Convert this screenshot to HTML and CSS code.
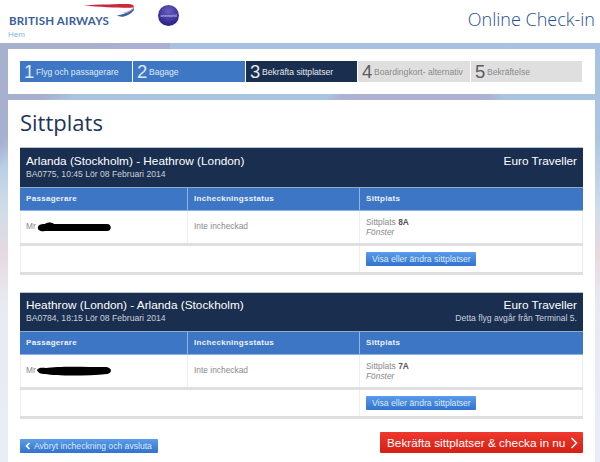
FILE: index.html
```html
<!DOCTYPE html>
<html lang="en">
<head>
    <meta charset="UTF-8">
    <meta name="viewport" content="width=device-width, initial-scale=1.0">
    <title>Online Check-in</title>
    <link rel="stylesheet" href="styles.css">
</head>
<body>
    <div class="header">
        <div class="logo-box">
            <div class="logo-top">
                <span class="logo-name">BRITISH AIRWAYS</span>
                <svg class="speedmarque" width="54" height="14" viewBox="0 0 54 14">
                    <path d="M0 1.5 C14 0.5 36 0 45 0 C49 0 51 1 51 3.5 C44 4 22 3.5 0 1.5 Z" fill="#c8283a"/>
                    <path d="M34 11.5 C40 10.5 46 8 51 4 L51 6 C48 10 44 12 41 12.5 C38 13 36 12.5 34 11.5 Z" fill="#3a62a8"/>
                    <path d="M39 9 C43 8 47 6.5 51 3.5 C50 5.5 47 8 43 9 Z" fill="#dfa9ae"/>
                </svg>
            </div>
            <a class="home-link">Hem</a>
        </div>
        <div class="oneworld"><span>oneworld</span></div>
        <div class="page-name">Online Check-in</div>
    </div>

    <div class="page">
        <div class="steps-panel">
            <div class="steps">
                <div class="step done"><b>1</b><span>Flyg och passagerare</span></div>
                <div class="step done"><b>2</b><span>Bagage</span></div>
                <div class="step current"><b>3</b><span>Bekräfta sittplatser</span></div>
                <div class="step todo"><b>4</b><span>Boardingkort- alternativ</span></div>
                <div class="step todo"><b>5</b><span>Bekräftelse</span></div>
            </div>
        </div>

        <div class="main-panel">
            <h1>Sittplats</h1>

            <div class="flight">
                <div class="flight-head">
                    <div>
                        <h2>Arlanda (Stockholm) - Heathrow (London)</h2>
                        <p>BA0775, 10:45 Lör 08 Februari 2014</p>
                    </div>
                    <div class="cabin">
                        <h2>Euro Traveller</h2>
                    </div>
                </div>
                <div class="row head-row">
                    <div class="cell">Passagerare</div>
                    <div class="cell">Incheckningsstatus</div>
                    <div class="cell">Sittplats</div>
                </div>
                <div class="row info-row">
                    <div class="cell">Mr<svg class="blot" width="75" height="10" viewBox="0 0 75 10"><path d="M1 5 C2 2 5 2 8 2 C10 0 15 0 17 2 L70 2 C75 2 75 9 70 9 L8 9 C4 10 0 8 1 5 Z"/></svg></div>
                    <div class="cell">Inte incheckad</div>
                    <div class="cell">Sittplats <strong>8A</strong><br><em>Fönster</em></div>
                </div>
                <div class="row action-row">
                    <div class="cell"></div>
                    <div class="cell"></div>
                    <div class="cell"><button class="small-button">Visa eller ändra sittplatser</button></div>
                </div>
            </div>

            <div class="flight">
                <div class="flight-head short">
                    <div>
                        <h2>Heathrow (London) - Arlanda (Stockholm)</h2>
                        <p>BA0784, 18:15 Lör 08 Februari 2014</p>
                    </div>
                    <div class="cabin">
                        <h2>Euro Traveller</h2>
                        <p>Detta flyg avgår från Terminal 5.</p>
                    </div>
                </div>
                <div class="row head-row">
                    <div class="cell">Passagerare</div>
                    <div class="cell">Incheckningsstatus</div>
                    <div class="cell">Sittplats</div>
                </div>
                <div class="row info-row">
                    <div class="cell">Mr<svg class="blot" width="75" height="10" viewBox="0 0 75 10"><path d="M0 4 C2 1 6 2 9 2 C20 0 50 1 68 1 C75 1 76 7 70 8 C50 10 20 10 8 8 C4 8 1 7 0 4 Z"/></svg></div>
                    <div class="cell">Inte incheckad</div>
                    <div class="cell">Sittplats <strong>7A</strong><br><em>Fönster</em></div>
                </div>
                <div class="row action-row">
                    <div class="cell"></div>
                    <div class="cell"></div>
                    <div class="cell"><button class="small-button">Visa eller ändra sittplatser</button></div>
                </div>
            </div>

            <div class="footer-buttons">
                <button class="small-button back-button">
                    <svg width="6" height="8" viewBox="0 0 6 8"><path d="M4.5 1 L1.5 4 L4.5 7" fill="none" stroke="#fff" stroke-width="1.6"/></svg>
                    Avbryt incheckning och avsluta
                </button>
                <button class="confirm-button">
                    Bekräfta sittplatser &amp; checka in nu
                    <svg width="8" height="12" viewBox="0 0 8 12"><path d="M1.5 1 L6.5 6 L1.5 11" fill="none" stroke="#fff" stroke-width="1.5"/></svg>
                </button>
            </div>
        </div>
    </div>
</body>
</html>
```

FILE: styles.css
```css
* {
    margin: 0;
    padding: 0;
    box-sizing: border-box;
}

html, body {
    height: 462px;
    overflow: hidden;
}

body {
    font-family: "Liberation Sans", Arial, sans-serif;
    background: #fff;
    color: #666;
}

.header {
    display: flex;
    height: 43px;
    background: #fff;
}

.logo-box {
    width: 158px;
    padding: 4px 0 0 9px;
}

.logo-top {
    display: flex;
    height: 26px;
}

.logo-name {
    margin-top: 10px;
    font-family: Lato, sans-serif;
    font-size: 11.5px;
    font-weight: 700;
    letter-spacing: 0.2px;
    line-height: 14px;
    color: #3a5f96;
    white-space: nowrap;
}

.speedmarque {
    flex-shrink: 0;
    margin-left: -26px;
}

.home-link {
    display: block;
    margin-left: -1px;
    font-size: 8px;
    line-height: 10px;
    color: #7db4f0;
}

.oneworld {
    display: flex;
    align-items: center;
    justify-content: center;
    width: 21px;
    height: 21px;
    margin-top: 5px;
    border-radius: 50%;
    background: radial-gradient(circle at 50% 30%, #6a5fc0, #2c2388 75%);
    font-size: 4px;
    color: #d8d8f0;
}

.page-name {
    margin-left: auto;
    padding: 7px 5px 0 0;
    font-family: "Open Sans", sans-serif;
    font-size: 18px;
    font-weight: 300;
    line-height: 24px;
    color: #1f4f96;
}

.page {
    height: 419px;
    padding: 6px 5px 0 8px;
    background:
        radial-gradient(ellipse 95px 60px at 415px 75px, #aeb2d2 0, #aeb2d2 85%, rgba(174, 178, 210, 0) 100%) no-repeat,
        linear-gradient(135deg, #a8b0d0 0, #a8b0d0 70px, rgba(168, 176, 208, 0) 90px) no-repeat,
        linear-gradient(to bottom, rgba(170, 175, 210, 0.9) 0, rgba(170, 175, 210, 0) 57px) 0 0 / 170px 100% no-repeat,
        linear-gradient(to bottom, #a6c2e0 0, #abc6e2 22%, #cfdde9 40%, #e6d9e1 50%, #e8e9f1 62%, #e9eef6 100%);
}

.steps-panel {
    height: 45px;
    padding: 12px 12px 0;
    background: #fff;
}

.steps {
    display: grid;
    grid-template-columns: 113px 113px 112px 113px 112px;
    height: 21px;
}

.step {
    display: flex;
    align-items: center;
    overflow: hidden;
    padding-left: 4px;
    border-right: 1px solid #fff;
    font-size: 8.6px;
    white-space: nowrap;
}

.step b {
    width: 10px;
    margin-right: 2px;
    font-size: 18.5px;
    font-weight: 400;
    text-align: center;
}

.step.done {
    background: #3e78c5;
    color: #dfe9f6;
}

.step.current {
    background: #1a2f50;
    color: #e4e8ee;
}

.step.todo {
    background: #dfdfdf;
    color: #8a8a8a;
}

.step.todo b {
    color: #5c5c5c;
}

.main-panel {
    height: 362px;
    margin-top: 6px;
    padding: 8px 12px 0;
    background: #fff;
}

h1 {
    height: 39px;
    font-family: "Open Sans", sans-serif;
    font-size: 22px;
    font-weight: 400;
    line-height: 29px;
    color: #1d3557;
}

.flight {
    margin-bottom: 17px;
    border-bottom: 3px solid #dfdfdf;
}

.flight-head {
    display: flex;
    justify-content: space-between;
    height: 40px;
    padding: 6px;
    border-top: 1px solid #b9c2cf;
    background: #1a2f50;
    color: #e8ecf2;
}

.flight-head.short {
    height: 39px;
    padding-top: 5px;
}

.flight-head h2 {
    font-size: 11.8px;
    font-weight: 400;
    line-height: 15px;
    color: #fff;
}

.flight-head p {
    font-size: 8.6px;
    line-height: 11px;
    color: #c9d1dc;
}

.cabin {
    text-align: right;
}

.row {
    display: grid;
    grid-template-columns: 168px 172px 223px;
}

.head-row {
    height: 24px;
    border-top: 1px solid #8ea9cc;
    border-bottom: 1px solid #8fb4e2;
    background: #3d76c4;
    font-size: 8px;
    font-weight: 700;
    letter-spacing: 0.3px;
    line-height: 21px;
    color: #eef3fa;
}

.head-row .cell {
    padding-left: 6px;
    border-right: 1px solid #8fb4e2;
}

.head-row .cell:last-child {
    border-right: none;
}

.info-row {
    height: 35px;
    border-bottom: 3px solid #dfdfdf;
    font-size: 8.4px;
    line-height: 10px;
    color: #8a8a8a;
}

.info-row .cell {
    padding: 6px 0 0 6px;
    border-right: 1px solid #eee;
}

.info-row .cell:nth-child(1),
.info-row .cell:nth-child(2) {
    padding-top: 10px;
}

.info-row .cell:first-child,
.action-row .cell:first-child {
    padding-left: 5px;
    border-left: 1px solid #eee;
}

.info-row strong {
    color: #555;
}

.blot {
    margin-left: 1px;
    vertical-align: -3px;
}

.action-row {
    height: 26px;
}

.action-row .cell {
    padding: 6px 0 0 6px;
}

.action-row .cell:nth-child(2),
.action-row .cell:nth-child(3) {
    border-right: 1px solid #eee;
}

.small-button {
    display: block;
    width: 110px;
    height: 14px;
    padding: 0 6px;
    border: none;
    border-radius: 1px;
    background: linear-gradient(to bottom, #5a9bea, #3273cc);
    font-family: "Liberation Sans", Arial, sans-serif;
    font-size: 8.6px;
    color: #dce8f8;
    text-align: left;
    white-space: nowrap;
}

.footer-buttons {
    display: flex;
    align-items: flex-end;
    justify-content: space-between;
    margin-top: -4px;
}

.back-button {
    display: flex;
    align-items: center;
    gap: 3px;
    width: 138px;
    height: 14px;
    padding-left: 5px;
}

.confirm-button {
    display: flex;
    align-items: center;
    justify-content: space-between;
    width: 203px;
    height: 21px;
    padding: 0 5px 0 7px;
    border: none;
    border-radius: 1px;
    background: linear-gradient(to bottom, #f0392e, #d61f14);
    font-family: "Liberation Sans", Arial, sans-serif;
    font-size: 11.8px;
    color: #fff;
    white-space: nowrap;
}
```
